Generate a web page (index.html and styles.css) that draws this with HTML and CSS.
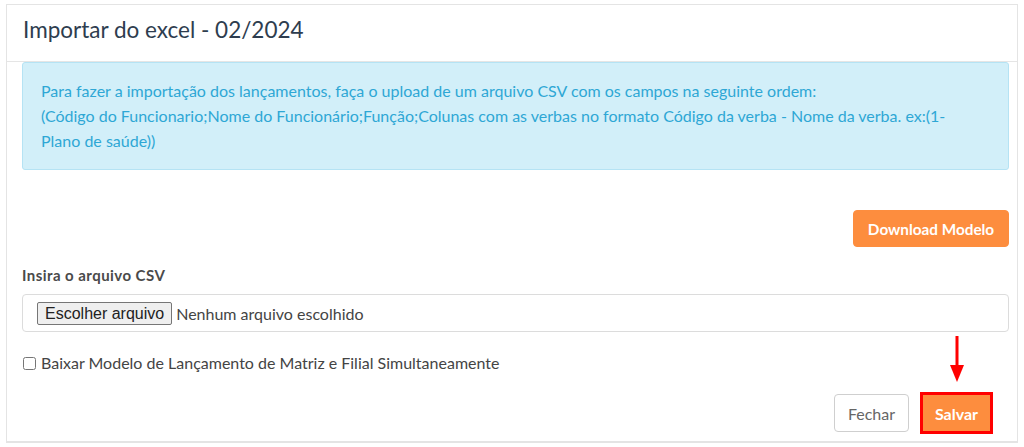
FILE: index.html
```html
<!DOCTYPE html>
<html lang="pt-BR">
<head>
<meta charset="utf-8">
<title>Importar do excel</title>
<link rel="stylesheet" href="styles.css">
</head>
<body>
<div class="modal">
  <div class="modal-header">
    <h1 class="modal-title">Importar do excel - 02/2024</h1>
  </div>
  <div class="modal-body">
    <div class="alert">
      Para fazer a importação dos lançamentos, faça o upload de um arquivo CSV com os campos na seguinte ordem:<br>
      (Código do Funcionario;Nome do Funcionário;Função;Colunas com as verbas no formato Código da verba - Nome da verba. ex:(1-<br>
      Plano de saúde))
    </div>
    <div class="download-row">
      <button class="btn btn-orange btn-download">Download Modelo</button>
    </div>
    <label class="field-label">Insira o arquivo CSV</label>
    <div class="file-box">
      <span class="file-btn">Escolher arquivo</span>
      <span class="file-name">Nenhum arquivo escolhido</span>
    </div>
    <label class="check-row">
      <input type="checkbox" class="check">
      <span>Baixar Modelo de Lançamento de Matriz e Filial Simultaneamente</span>
    </label>
  </div>
  <div class="modal-footer">
    <button class="btn btn-light">Fechar</button>
    <div class="salvar-wrap">
      <svg class="arrow" width="16" height="46" viewBox="0 0 16 46">
        <rect x="6.5" y="0" width="3" height="32" fill="#f00"/>
        <polygon points="1,29 15,29 8,46" fill="#f00"/>
      </svg>
      <button class="btn btn-orange btn-salvar">Salvar</button>
    </div>
  </div>
</div>
</body>
</html>
```
FILE: styles.css
```css
* { box-sizing: border-box; }
html, body { margin: 0; padding: 0; background: #fff; }
body {
  font-family: Lato, "Noto Sans", sans-serif;
  color: #444;
  width: 1024px;
  height: 447px;
  overflow: hidden;
}
.modal {
  margin: 4px 6px 0 6px;
  width: 1012px;
  height: 439px;
  border: 1px solid #e4e4e4;
  border-bottom-width: 2px;
  display: flex;
  flex-direction: column;
}
.modal-header {
  height: 57px;
  border-bottom: 1px solid #e5e5e5;
  display: flex;
  align-items: center;
  padding: 0 16px 8px 16px;
}
.modal-title {
  margin: 0;
  font-weight: 400;
  font-size: 22.5px;
  color: #2e3d4f;
}
.modal-body {
  padding: 0 8px 0 15px;
}
.alert {
  background: #d2eff9;
  border: 1px solid #b5e3f4;
  border-radius: 3px;
  color: #2ea7d5;
  font-size: 16px;
  line-height: 25px;
  padding: 15px 18px 16px 18px;
  height: 108px;
}
.download-row {
  display: flex;
  justify-content: flex-end;
  margin-top: 40px;
}
.btn {
  font-family: Lato, "Noto Sans", sans-serif;
  font-size: 16px;
  border-radius: 4px;
  cursor: pointer;
}
.btn-orange {
  background: #fd8d3e;
  color: #fff;
  font-weight: 700;
  border: 1px solid #fd8d3e;
  height: 37px;
  padding: 0 14px;
}
.btn-download {
  font-size: 15.3px;
  width: 156px;
  padding: 0;
}
.field-label {
  display: block;
  margin-top: 18px;
  font-size: 15px;
  font-weight: 700;
  letter-spacing: 0.45px;
  color: #4a4a4a;
  line-height: 20px;
}
.file-box {
  margin-top: 9px;
  height: 38px;
  border: 1px solid #dcdcdc;
  border-radius: 4px;
  display: flex;
  align-items: center;
  padding-left: 14px;
}
.file-btn {
  font-family: "Liberation Sans", Arial, sans-serif;
  font-size: 16px;
  color: #222;
  background: #efefef;
  border: 1px solid #767676;
  border-radius: 2px;
  height: 23px;
  line-height: 21px;
  padding: 0 7px;
}
.file-name {
  font-size: 16px;
  color: #444;
  margin-left: 4px;
}
.check-row {
  display: flex;
  align-items: center;
  margin-top: 21px;
  font-size: 16px;
  color: #444;
  line-height: 20px;
}
.check {
  margin: 0 5px 0 1px;
  width: 13px;
  height: 13px;
}
.modal-footer {
  display: flex;
  justify-content: flex-end;
  align-items: flex-end;
  padding: 0 24px 0 0;
  margin-top: 19px;
}
.btn-light {
  background: #fff;
  color: #666;
  border: 1px solid #cfcfcf;
  height: 38px;
  width: 75px;
  margin-bottom: 2px;
}
.salvar-wrap {
  position: relative;
  margin-left: 11px;
}
.btn-salvar {
  border: 3px solid #f00;
  border-radius: 0;
  height: 42px;
  width: 73px;
  padding: 0;
  font-size: 16px;
  display: block;
}
.arrow {
  position: absolute;
  left: 29px;
  top: -56px;
}
```
